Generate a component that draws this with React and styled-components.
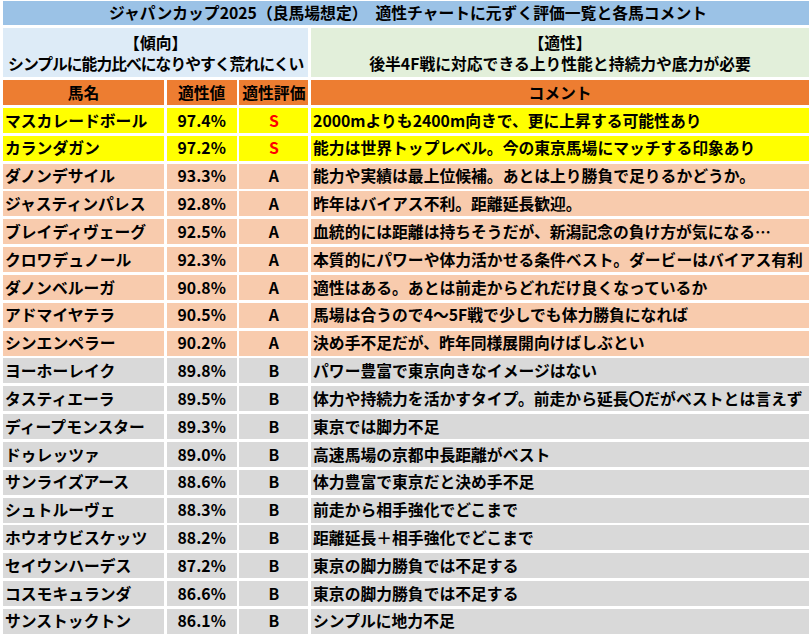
import React from "react";
import styled, { createGlobalStyle } from "styled-components";

const Global = createGlobalStyle`
  html, body { margin: 0; padding: 0; background: #ffffff; }
  body {
    font-family: "Noto Sans CJK JP", "Noto Sans", sans-serif;
    color: #000;
  }
`;

const tones = {
  s: "#ffff00",
  a: "#f8cbad",
  b: "#d9d9d9",
};

const Page = styled.div`
  padding: 1px 2px 0 3px;
  width: 811px;
  box-sizing: border-box;
`;

const Sheet = styled.div`
  display: grid;
  grid-template-columns: 161px 70px 69px 498px;
  grid-template-rows: 24px 49.5px 25px;
  grid-auto-rows: 25px;
  column-gap: 2.7px;
  row-gap: 2.84px;
  font-size: 15.8px;
  font-weight: 700;
  line-height: 1;
`;

const TitleCell = styled.div`
  grid-column: 1 / -1;
  background: #9bc2e6;
  display: flex;
  align-items: center;
  justify-content: center;
  white-space: pre;
  padding-left: 4px;
`;

const SectionCell = styled.div`
  grid-column: ${(p) => (p.$wide ? "1 / 4" : "4 / 5")};
  background: ${(p) => (p.$wide ? "#ddebf7" : "#e2efda")};
  display: flex;
  flex-direction: column;
  align-items: center;
  justify-content: center;
  gap: 5px;
  padding-top: 2px;
`;

const SectionLine = styled.div`
  white-space: nowrap;
  letter-spacing: ${(p) => (p.$tight ? "-1px" : "0")};
`;

const HeadCell = styled.div`
  background: #ed7d31;
  display: flex;
  align-items: center;
  justify-content: center;
`;

const Cell = styled.div`
  background: ${(p) => tones[p.$tone]};
  display: flex;
  align-items: center;
  justify-content: ${(p) => (p.$center ? "center" : "flex-start")};
  padding-left: ${(p) => (p.$center ? "0" : "2px")};
  white-space: nowrap;
  overflow: hidden;
  color: ${(p) => (p.$red ? "#ff0000" : "#000")};
`;

const rows = [
  ["マスカレードボール", "97.4%", "S", "2000mよりも2400m向きで、更に上昇する可能性あり"],
  ["カランダガン", "97.2%", "S", "能力は世界トップレベル。今の東京馬場にマッチする印象あり"],
  ["ダノンデサイル", "93.3%", "A", "能力や実績は最上位候補。あとは上り勝負で足りるかどうか。"],
  ["ジャスティンパレス", "92.8%", "A", "昨年はバイアス不利。距離延長歓迎。"],
  ["ブレイディヴェーグ", "92.5%", "A", "血統的には距離は持ちそうだが、新潟記念の負け方が気になる…"],
  ["クロワデュノール", "92.3%", "A", "本質的にパワーや体力活かせる条件ベスト。ダービーはバイアス有利"],
  ["ダノンベルーガ", "90.8%", "A", "適性はある。あとは前走からどれだけ良くなっているか"],
  ["アドマイヤテラ", "90.5%", "A", "馬場は合うので4～5F戦で少しでも体力勝負になれば"],
  ["シンエンペラー", "90.2%", "A", "決め手不足だが、昨年同様展開向けばしぶとい"],
  ["ヨーホーレイク", "89.8%", "B", "パワー豊富で東京向きなイメージはない"],
  ["タスティエーラ", "89.5%", "B", "体力や持続力を活かすタイプ。前走から延長〇だがベストとは言えず"],
  ["ディープモンスター", "89.3%", "B", "東京では脚力不足"],
  ["ドゥレッツァ", "89.0%", "B", "高速馬場の京都中長距離がベスト"],
  ["サンライズアース", "88.6%", "B", "体力豊富で東京だと決め手不足"],
  ["シュトルーヴェ", "88.3%", "B", "前走から相手強化でどこまで"],
  ["ホウオウビスケッツ", "88.2%", "B", "距離延長＋相手強化でどこまで"],
  ["セイウンハーデス", "87.2%", "B", "東京の脚力勝負では不足する"],
  ["コスモキュランダ", "86.6%", "B", "東京の脚力勝負では不足する"],
  ["サンストックトン", "86.1%", "B", "シンプルに地力不足"],
];

export default function App() {
  return (
    <Page>
      <Global />
      <Sheet>
        <TitleCell>ジャパンカップ2025（良馬場想定）　適性チャートに元ずく評価一覧と各馬コメント</TitleCell>
        <SectionCell $wide>
          <SectionLine>【傾向】</SectionLine>
          <SectionLine $tight>シンプルに能力比べになりやすく荒れにくい</SectionLine>
        </SectionCell>
        <SectionCell>
          <SectionLine>【適性】</SectionLine>
          <SectionLine>後半4F戦に対応できる上り性能と持続力や底力が必要</SectionLine>
        </SectionCell>
        <HeadCell>馬名</HeadCell>
        <HeadCell>適性値</HeadCell>
        <HeadCell>適性評価</HeadCell>
        <HeadCell>コメント</HeadCell>
        {rows.map(([name, value, grade, comment]) => {
          const tone = grade.toLowerCase();
          return (
            <React.Fragment key={name}>
              <Cell $tone={tone}>{name}</Cell>
              <Cell $tone={tone} $center>{value}</Cell>
              <Cell $tone={tone} $center $red={grade === "S"}>{grade}</Cell>
              <Cell $tone={tone}>{comment}</Cell>
            </React.Fragment>
          );
        })}
      </Sheet>
    </Page>
  );
}
